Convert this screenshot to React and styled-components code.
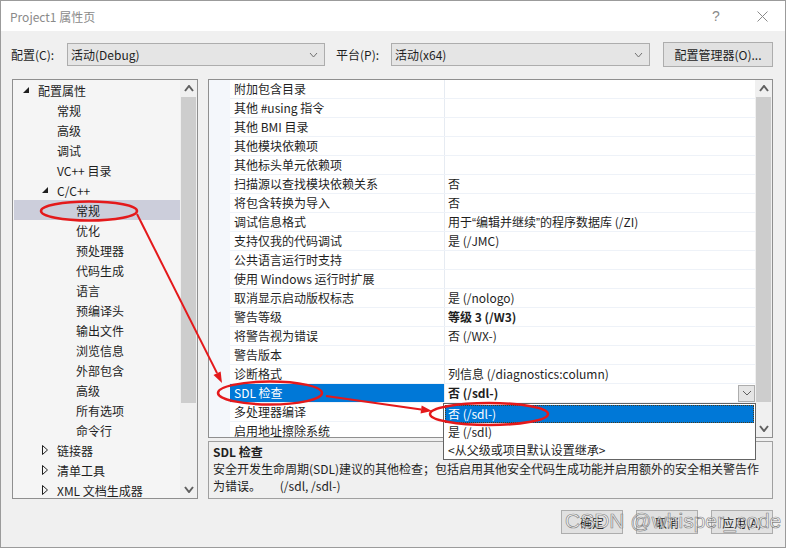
import React from "react";
import styled, { createGlobalStyle } from "styled-components";

const GlobalStyle = createGlobalStyle`
  html, body { margin: 0; padding: 0; background: #fff; }
  body {
    font-family: "Noto Sans CJK SC", "Noto Sans", sans-serif;
    font-size: 12px;
    color: #1e1e1e;
  }
  * { box-sizing: border-box; }
`;

const Window = styled.div`
  position: relative;
  width: 786px;
  height: 548px;
  border: 1px solid #9b9b9b;
  background: #f0f0f0;
  display: flex;
  flex-direction: column;
  overflow: hidden;
`;

const TitleBar = styled.div`
  height: 30px;
  flex: none;
  background: #fff;
  display: flex;
  align-items: center;
  padding-left: 9px;
  color: #8a8a8a;
  font-size: 12px;
`;

const TitleText = styled.div`
  flex: 1;
`;

const TitleButton = styled.div`
  width: 46px;
  height: 30px;
  display: flex;
  align-items: center;
  justify-content: center;
  color: #8a8a8a;
  font-size: 14px;
  font-family: "Liberation Sans", sans-serif;
`;

const Toolbar = styled.div`
  margin-top: 11px;
  height: 25px;
  flex: none;
  display: flex;
  align-items: center;
  padding: 0 12px 0 10px;
`;

const Label = styled.div`
  width: ${(p) => p.$w}px;
  margin-left: ${(p) => p.$ml || 0}px;
  flex: none;
  white-space: nowrap;
`;

const Select = styled.div`
  width: ${(p) => p.$w}px;
  height: 23px;
  flex: none;
  border: 1px solid #adadad;
  background: #e5e5e5;
  display: flex;
  align-items: center;
  padding: 0 6px 0 3px;
`;

const SelectText = styled.div`
  flex: 1;
`;

const Button = styled.div`
  width: ${(p) => p.$w}px;
  height: ${(p) => p.$h}px;
  margin-left: ${(p) => p.$ml || 0}px;
  flex: none;
  border: 1px solid #adadad;
  background: #e1e1e1;
  display: flex;
  align-items: center;
  justify-content: center;
  white-space: nowrap;
`;

const Main = styled.div`
  margin-top: 12px;
  height: 420px;
  flex: none;
  display: flex;
  gap: 10px;
  padding: 0 12px 0 11px;
`;

const TreePanel = styled.div`
  width: 186px;
  flex: none;
  border: 1px solid #8f8f8f;
  background: #f5f5f5;
  display: flex;
  overflow: hidden;
`;

const TreeList = styled.div`
  flex: 1;
  padding-left: 1px;
  overflow: hidden;
`;

const TreeRow = styled.div`
  height: 20px;
  display: flex;
  align-items: center;
  padding-left: ${(p) => 9 + p.$level * 19}px;
  background: ${(p) => (p.$selected ? "#cccedb" : "transparent")};
  white-space: nowrap;
`;

const Toggle = styled.div`
  width: 15px;
  flex: none;
  display: flex;
  align-items: center;
`;

const Scrollbar = styled.div`
  width: 17px;
  flex: none;
  background: #f0f0f0;
  display: flex;
  flex-direction: column;
`;

const ScrollArrow = styled.div`
  height: 17px;
  flex: none;
  display: flex;
  align-items: center;
  justify-content: center;
`;

const Thumb = styled.div`
  height: ${(p) => p.$h}px;
  flex: none;
  margin: 0 1px;
  background: #cdcdcd;
`;

const ScrollSpace = styled.div`
  flex: 1;
`;

const RightCol = styled.div`
  width: 565px;
  flex: none;
  display: flex;
  flex-direction: column;
  gap: 3px;
`;

const GridPanel = styled.div`
  height: 359px;
  flex: none;
  border: 1px solid #8f8f8f;
  background: #fff;
  display: flex;
  overflow: hidden;
`;

const Gutter = styled.div`
  width: 21px;
  flex: none;
  background: #f4f7fb;
`;

const GridRows = styled.div`
  flex: 1;
  overflow: hidden;
`;

const PropRow = styled.div`
  height: 19px;
  display: grid;
  grid-template-columns: 214px 1fr;
  border-bottom: 1px solid #eef2f8;
  line-height: 18px;
  white-space: nowrap;
`;

const NameCell = styled.div`
  padding-left: 4px;
  background: ${(p) => (p.$selected ? "#0078d7" : "#fff")};
  color: ${(p) => (p.$selected ? "#fff" : "#1e1e1e")};
  overflow: hidden;
`;

const ValueCell = styled.div`
  border-left: 1px solid #e6ebf2;
  padding-left: 3px;
  display: flex;
  align-items: center;
  font-weight: ${(p) => (p.$bold ? 700 : 400)};
  overflow: hidden;
`;

const ValueText = styled.div`
  flex: 1;
`;

const Quote = styled.span`
  font-family: "Liberation Sans", sans-serif;
`;

const DropButton = styled.div`
  width: 17px;
  height: 17px;
  flex: none;
  border: 1px solid #adadad;
  background: #e5e5e5;
  display: flex;
  align-items: center;
  justify-content: center;
`;

const DescPanel = styled.div`
  height: 58px;
  flex: none;
  border: 1px solid #a0a0a0;
  background: #f0f0f0;
  padding: 1px 4px;
  line-height: 17px;
  white-space: pre;
`;

const DescTitle = styled.div`
  font-weight: 700;
`;

const Footer = styled.div`
  margin-top: 11px;
  height: 24px;
  flex: none;
  display: flex;
  justify-content: flex-end;
  gap: 13px;
  padding-right: 12px;
`;

const DropList = styled.div`
  position: absolute;
  left: 442px;
  top: 402px;
  width: 313px;
  height: 57px;
  border: 1px solid #646464;
  background: #fff;
  padding: 1px;
`;

const DropItem = styled.div`
  height: 18px;
  line-height: 18px;
  padding-left: 3px;
  white-space: nowrap;
  background: ${(p) => (p.$active ? "#0078d7" : "#fff")};
  color: ${(p) => (p.$active ? "#fff" : "#1e1e1e")};
  outline: ${(p) => (p.$active ? "1px dotted #4a3a1a" : "none")};
  outline-offset: -1px;
`;

const Annotation = styled.svg`
  position: absolute;
  left: -1px;
  top: -1px;
  width: 786px;
  height: 548px;
  pointer-events: none;
`;

const Watermark = styled.div`
  position: absolute;
  left: 564px;
  top: 508px;
  font-family: "Liberation Sans", sans-serif;
  font-size: 21px;
  color: rgba(255, 255, 255, 0.7);
  -webkit-text-stroke: 0.7px rgba(95, 95, 95, 0.75);
  white-space: nowrap;
  pointer-events: none;
`;

const Chevron = ({ dir = "down", w = 8, h = 5, sw = 1, color = "#606060" }) => (
  <svg width={w + 2} height={h + 2} viewBox={`-1 -1 ${w + 2} ${h + 2}`}>
    <polyline
      points={dir === "down" ? `0,0 ${w / 2},${h} ${w},0` : `0,${h} ${w / 2},0 ${w},${h}`}
      fill="none"
      stroke={color}
      strokeWidth={sw}
    />
  </svg>
);

const OpenTri = () => (
  <svg width="7" height="7" viewBox="0 0 7 7">
    <polygon points="6,0 6,6 0,6" fill="#1e1e1e" />
  </svg>
);

const ClosedTri = () => (
  <svg width="6" height="10" viewBox="0 0 6 10">
    <polygon points="0.5,0.5 5.5,5 0.5,9.5" fill="none" stroke="#1e1e1e" strokeWidth="1" />
  </svg>
);

const tree = [
  { label: "配置属性", level: 0, toggle: "open" },
  { label: "常规", level: 1 },
  { label: "高级", level: 1 },
  { label: "调试", level: 1 },
  { label: "VC++ 目录", level: 1 },
  { label: "C/C++", level: 1, toggle: "open" },
  { label: "常规", level: 2, selected: true },
  { label: "优化", level: 2 },
  { label: "预处理器", level: 2 },
  { label: "代码生成", level: 2 },
  { label: "语言", level: 2 },
  { label: "预编译头", level: 2 },
  { label: "输出文件", level: 2 },
  { label: "浏览信息", level: 2 },
  { label: "外部包含", level: 2 },
  { label: "高级", level: 2 },
  { label: "所有选项", level: 2 },
  { label: "命令行", level: 2 },
  { label: "链接器", level: 1, toggle: "closed" },
  { label: "清单工具", level: 1, toggle: "closed" },
  { label: "XML 文档生成器", level: 1, toggle: "closed" },
];

const props = [
  { name: "附加包含目录", value: "" },
  { name: "其他 #using 指令", value: "" },
  { name: "其他 BMI 目录", value: "" },
  { name: "其他模块依赖项", value: "" },
  { name: "其他标头单元依赖项", value: "" },
  { name: "扫描源以查找模块依赖关系", value: "否" },
  { name: "将包含转换为导入", value: "否" },
  {
    name: "调试信息格式",
    value: (
      <>
        用于<Quote>“</Quote>编辑并继续<Quote>”</Quote>的程序数据库 (/ZI)
      </>
    ),
  },
  { name: "支持仅我的代码调试", value: "是 (/JMC)" },
  { name: "公共语言运行时支持", value: "" },
  { name: "使用 Windows 运行时扩展", value: "" },
  { name: "取消显示启动版权标志", value: "是 (/nologo)" },
  { name: "警告等级", value: "等级 3 (/W3)", bold: true },
  { name: "将警告视为错误", value: "否 (/WX-)" },
  { name: "警告版本", value: "" },
  { name: "诊断格式", value: "列信息 (/diagnostics:column)" },
  { name: "SDL 检查", value: "否 (/sdl-)", bold: true, selected: true, drop: true },
  { name: "多处理器编译", value: "" },
  { name: "启用地址擦除系统", value: "" },
];

const arrowHead = (tx, ty, sx, sy, len = 11, half = 4) => {
  const dx = tx - sx;
  const dy = ty - sy;
  const l = Math.hypot(dx, dy);
  const ux = dx / l;
  const uy = dy / l;
  const bx = tx - ux * len;
  const by = ty - uy * len;
  const nx = -uy;
  const ny = ux;
  return {
    base: [bx, by],
    points: `${tx},${ty} ${bx + nx * half},${by + ny * half} ${bx - nx * half},${by - ny * half}`,
  };
};

export default function App() {
  const a1 = arrowHead(222, 383, 137, 214);
  const a2 = arrowHead(432, 411, 326, 396);
  const red = "#e4191b";
  return (
    <>
      <GlobalStyle />
      <Window>
        <TitleBar>
          <TitleText>Project1 属性页</TitleText>
          <TitleButton>?</TitleButton>
          <TitleButton>
            <svg width="11" height="11" viewBox="0 0 11 11">
              <path d="M0.5 0.5 L10.5 10.5 M10.5 0.5 L0.5 10.5" stroke="#8a8a8a" strokeWidth="1" />
            </svg>
          </TitleButton>
        </TitleBar>

        <Toolbar>
          <Label $w={56}>配置(C):</Label>
          <Select $w={258}>
            <SelectText>活动(Debug)</SelectText>
            <Chevron w={7} h={4} color="#707070" />
          </Select>
          <Label $w={55} $ml={11}>平台(P):</Label>
          <Select $w={259}>
            <SelectText>活动(x64)</SelectText>
            <Chevron w={7} h={4} color="#707070" />
          </Select>
          <Button $w={110} $h={25} $ml={13}>配置管理器(O)...</Button>
        </Toolbar>

        <Main>
          <TreePanel>
            <TreeList>
              {tree.map((t, i) => (
                <TreeRow key={i} $level={t.level} $selected={t.selected}>
                  {t.toggle ? (
                    <Toggle>{t.toggle === "open" ? <OpenTri /> : <ClosedTri />}</Toggle>
                  ) : (
                    <Toggle />
                  )}
                  {t.label}
                </TreeRow>
              ))}
            </TreeList>
            <Scrollbar>
              <ScrollArrow>
                <Chevron dir="up" w={8} h={5} sw={2} />
              </ScrollArrow>
              <Thumb $h={306} />
              <ScrollSpace />
              <ScrollArrow>
                <Chevron dir="down" w={8} h={5} sw={2} />
              </ScrollArrow>
            </Scrollbar>
          </TreePanel>

          <RightCol>
            <GridPanel>
              <Gutter />
              <GridRows>
                {props.map((p, i) => (
                  <PropRow key={i}>
                    <NameCell $selected={p.selected}>{p.name}</NameCell>
                    <ValueCell $bold={p.bold}>
                      <ValueText>{p.value}</ValueText>
                      {p.drop && (
                        <DropButton>
                          <Chevron w={8} h={4} color="#606060" />
                        </DropButton>
                      )}
                    </ValueCell>
                  </PropRow>
                ))}
              </GridRows>
              <Scrollbar>
                <ScrollArrow>
                  <Chevron dir="up" w={8} h={5} sw={2} />
                </ScrollArrow>
                <Thumb $h={305} />
                <ScrollSpace />
                <ScrollArrow>
                  <Chevron dir="down" w={8} h={5} sw={2} />
                </ScrollArrow>
              </Scrollbar>
            </GridPanel>
            <DescPanel>
              <DescTitle>SDL 检查</DescTitle>
              <div>安全开发生命周期(SDL)建议的其他检查；包括启用其他安全代码生成功能并启用额外的安全相关警告作</div>
              <div>{"为错误。       (/sdl, /sdl-)"}</div>
            </DescPanel>
          </RightCol>
        </Main>

        <Footer>
          <Button $w={62} $h={24}>确定</Button>
          <Button $w={62} $h={24}>取消</Button>
          <Button $w={62} $h={24}>应用(A)</Button>
        </Footer>

        <DropList>
          <DropItem $active>否 (/sdl-)</DropItem>
          <DropItem>是 (/sdl)</DropItem>
          <DropItem>&lt;从父级或项目默认设置继承&gt;</DropItem>
        </DropList>

        <Watermark>CSDN @whisper_code</Watermark>

        <Annotation viewBox="0 0 786 548">
          <ellipse cx="89" cy="211" rx="48" ry="9.5" fill="none" stroke={red} strokeWidth="2.5" />
          <ellipse cx="270" cy="393" rx="52" ry="11.5" fill="none" stroke={red} strokeWidth="2.5" />
          <ellipse cx="489" cy="414" rx="59" ry="11" fill="none" stroke={red} strokeWidth="2.5" />
          <line x1="137" y1="214" x2={a1.base[0]} y2={a1.base[1]} stroke={red} strokeWidth="2" />
          <polygon points={a1.points} fill={red} />
          <line x1="326" y1="396" x2={a2.base[0]} y2={a2.base[1]} stroke={red} strokeWidth="2" />
          <polygon points={a2.points} fill={red} />
        </Annotation>
      </Window>
    </>
  );
}
